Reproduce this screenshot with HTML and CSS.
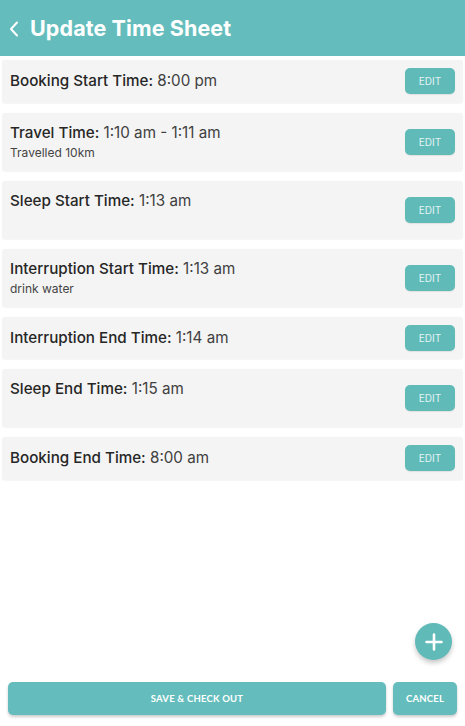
FILE: index.html
```html
<!DOCTYPE html>
<html>
<head>
<meta charset="utf-8">
<link rel="stylesheet" href="styles.css">
</head>
<body>
<div class="app">
  <header class="header">
    <svg class="back" width="12" height="16" viewBox="0 0 12 16"><path d="M9 1.5 L3 8 L9 14.5" fill="none" stroke="#fff" stroke-width="2" stroke-linecap="round" stroke-linejoin="round"/></svg>
    <h1 class="title">Update Time Sheet</h1>
  </header>
  <main class="list">
    <div class="card">
      <div class="info"><div class="line"><span class="label">Booking Start Time:</span> <span class="value">8:00 pm</span></div></div>
      <button class="edit">EDIT</button>
    </div>
    <div class="card tall">
      <div class="info"><div class="line"><span class="label">Travel Time:</span> <span class="value">1:10 am - 1:11 am</span></div><div class="sub">Travelled 10km</div></div>
      <button class="edit">EDIT</button>
    </div>
    <div class="card tall">
      <div class="info"><div class="line"><span class="label">Sleep Start Time:</span> <span class="value">1:13 am</span></div><div class="sub"></div></div>
      <button class="edit">EDIT</button>
    </div>
    <div class="card tall">
      <div class="info"><div class="line"><span class="label">Interruption Start Time:</span> <span class="value">1:13 am</span></div><div class="sub">drink water</div></div>
      <button class="edit">EDIT</button>
    </div>
    <div class="card">
      <div class="info"><div class="line"><span class="label">Interruption End Time:</span> <span class="value">1:14 am</span></div></div>
      <button class="edit">EDIT</button>
    </div>
    <div class="card tall">
      <div class="info"><div class="line"><span class="label">Sleep End Time:</span> <span class="value">1:15 am</span></div><div class="sub"></div></div>
      <button class="edit">EDIT</button>
    </div>
    <div class="card">
      <div class="info"><div class="line"><span class="label">Booking End Time:</span> <span class="value">8:00 am</span></div></div>
      <button class="edit">EDIT</button>
    </div>
  </main>
  <div class="fab-row">
    <button class="fab"><svg width="20" height="20" viewBox="0 0 20 20"><path d="M10 2.5 V17.5 M2.5 10 H17.5" stroke="#fff" stroke-width="2.6" stroke-linecap="round"/></svg></button>
  </div>
  <footer class="actions">
    <button class="btn save">SAVE &amp; CHECK OUT</button>
    <button class="btn cancel">CANCEL</button>
  </footer>
</div>
</body>
</html>
```
FILE: styles.css
```css
* { box-sizing: border-box; }
html, body { margin: 0; padding: 0; background: #fff; }
body { font-family: Inter, "Noto Sans", sans-serif; color: #222; }
.app { width: 465px; height: 726px; display: flex; flex-direction: column; }
.header {
  height: 56px; background: #64bdbc; display: flex; align-items: center;
  padding-left: 8px; gap: 10px; flex-shrink: 0;
}
.back { margin-top: 1px; }
.title { margin: 0; color: #fff; font-size: 21.5px; font-weight: 700; letter-spacing: 0.1px; }
.list { display: flex; flex-direction: column; gap: 10px; padding: 4px 2px 0 2px; }
.card {
  background: #f4f4f4; border-radius: 3px; height: 42.5px; display: flex;
  align-items: center; justify-content: space-between; padding: 0 8px 0 8px;
  box-shadow: 0 0.5px 1px rgba(0,0,0,0.04);
}
.card.tall { height: 58px; }
.info { display: flex; flex-direction: column; }
.line { font-size: 15.2px; line-height: 20px; color: #262626; }
.label { font-weight: 500; }
.value { font-weight: 400; color: #404040; }
.sub { font-size: 12px; line-height: 16px; height: 16px; color: #444; margin-top: 2px; }
.edit {
  width: 50px; height: 26px; border: none; border-radius: 5px; background: #5fbab8;
  color: #e3f4f3; font-family: Inter, sans-serif; font-size: 10px; padding: 0;
  box-shadow: 0 1px 1px rgba(0,0,0,0.08);
}
.fab-row { flex: 1; display: flex; justify-content: flex-end; align-items: flex-end; padding: 0 13px 22px 0; }
.fab {
  width: 37px; height: 37px; border-radius: 50%; border: none; background: #5fbab8;
  display: flex; align-items: center; justify-content: center; padding: 0;
  box-shadow: 0 3px 5px rgba(0,0,0,0.22);
}
.actions { display: flex; gap: 7px; padding: 0 8px 11px 8px; }
.btn {
  height: 33px; border: none; border-radius: 5px; background: #64bdbc; color: #fff;
  font-family: Lato, Inter, sans-serif; font-weight: 700; font-size: 9.5px; letter-spacing: 0.2px;
  box-shadow: 0 2px 3px rgba(0,0,0,0.2);
}
.save { flex: 1; }
.cancel { width: 64px; }
```
